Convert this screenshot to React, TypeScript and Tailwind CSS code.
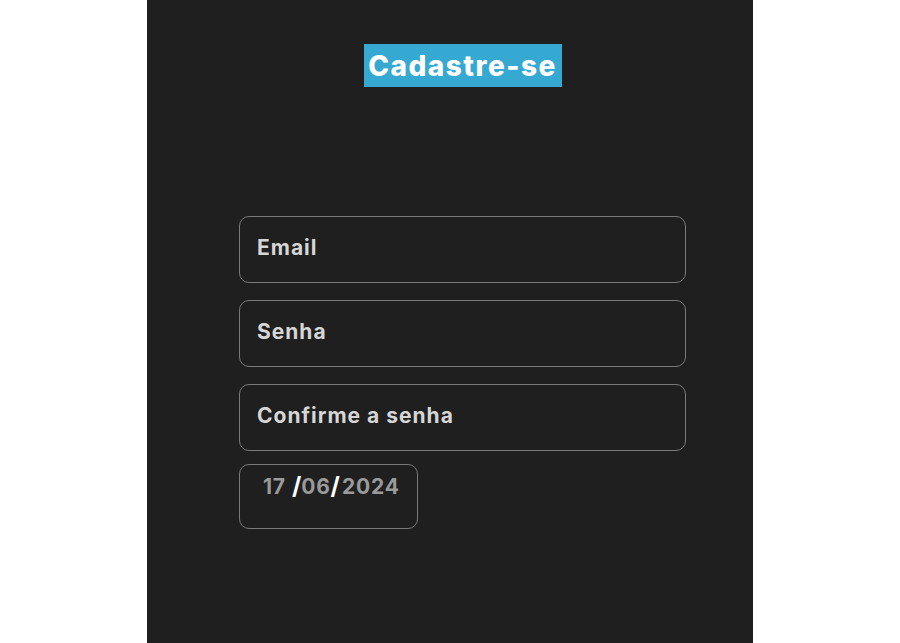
import React from 'react';

const font = { fontFamily: 'Inter, "Open Sans", sans-serif' };

function Field({ label }: { label: string }) {
  return (
    <div className="flex h-[67px] w-[447px] items-center rounded-[10px] border border-[#7a7a7a] px-[17px] pb-[3px]">
      <span className="text-[21px] font-bold tracking-[1px] text-[#d6d6d6]">{label}</span>
    </div>
  );
}

export default function App() {
  return (
    <div className="flex min-h-[643px] w-full justify-center bg-white" style={font}>
      <div className="flex w-[606px] flex-col bg-[#1f1f1f] pl-[92px] pt-[44px]">
        <div className="flex w-[447px] justify-center">
          <h1 className="flex h-[43px] w-[198px] items-center justify-center bg-[#35a9d1] text-[28px] font-extrabold leading-none tracking-[1.5px] text-white">
            Cadastre-se
          </h1>
        </div>
        <div className="mt-[129px] flex flex-col gap-[17px]">
          <Field label="Email" />
          <Field label="Senha" />
          <Field label="Confirme a senha" />
        </div>
        <div className="mt-[13px] flex h-[65px] w-[179px] items-start rounded-[10px] border border-[#7a7a7a] pl-[23px] pt-[6px]">
          <span className="text-[21px] font-bold tracking-[0.8px] text-[#9a9a9a]">17</span>
          <span className="ml-[6px] text-[24px] font-bold leading-[30px] text-white">/</span>
          <span className="text-[21px] font-bold tracking-[0.8px] text-[#9a9a9a]">06</span>
          <span className="text-[24px] font-bold leading-[30px] text-white">/</span>
          <span className="ml-[2px] text-[21px] font-bold tracking-[0.8px] text-[#9a9a9a]">2024</span>
        </div>
      </div>
    </div>
  );
}
